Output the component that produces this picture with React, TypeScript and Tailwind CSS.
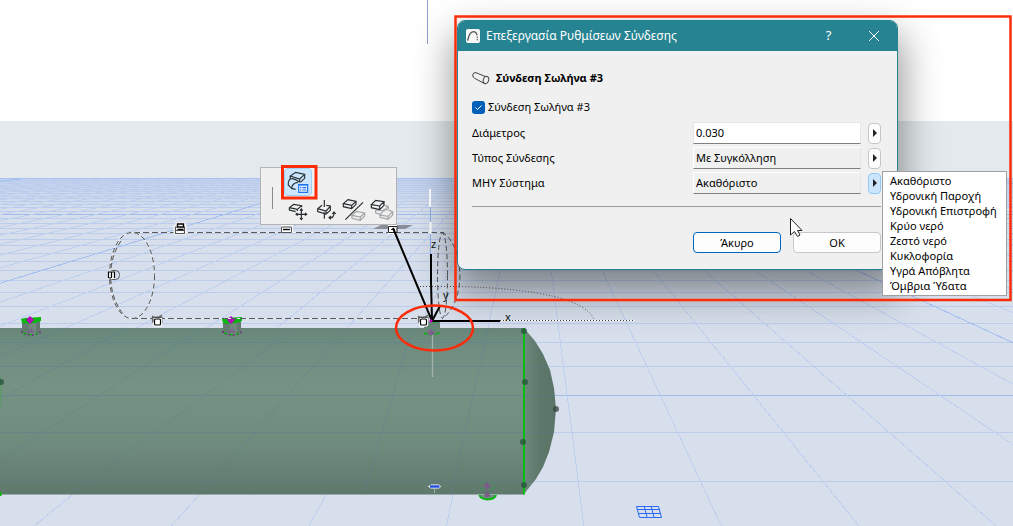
import React, { useState } from "react";

const VANISH_X = 532;
const HORIZON = 120;
const GRID_TOP = 178;

const rows = Array.from({ length: 36 }, (_, i) => i - 1);
const rays = Array.from({ length: 61 }, (_, i) => i - 30);

function Grid() {
  return (
    <g fill="none" shapeRendering="crispEdges">
      {rows.map((k) => {
        const y = HORIZON + 2317 / (6.41 + k);
        if (y < GRID_TOP) return null;
        const major = (k + 14) % 16 === 0;
        return <path key={k} d={`M0 ${y}H1013`} stroke={major ? "#a3bbea" : "#bccdec"} />;
      })}
      {rays.map((n) => {
        const slope = 0.1278 + 0.3386 * n;
        const major = (n + 10) % 16 === 0;
        return (
          <path
            key={n}
            d={`M${VANISH_X + slope * (GRID_TOP - HORIZON)} ${GRID_TOP}L${VANISH_X + slope * 420} 540`}
            stroke={major ? "#a3bff0" : "#bfcfef"}
          />
        );
      })}
    </g>
  );
}

function Nozzle({ x }: { x: number }) {
  return (
    <g transform={`translate(${x} 0)`}>
      <path d="M-9 320V333Q0 337 9 332V319Z" fill="#64796f" />
      <path d="M-2 320V335H5V320Z" fill="#7e978a" opacity=".5" />
      <path d="M-10 319L-6 318L10 317L10 321Q0 325 -9 323Z" fill="#08b80f" />
      <path d="M-1 316L3 320L-1 324L-5 320Z" fill="#b800bd" />
      <path d="M0 328L4 333H-4Z" fill="#7d5f8c" opacity=".8" />
      <path d="M-9 331V333Q0 337 9 333V330" fill="none" stroke="#7b1b86" strokeWidth="1.3" strokeDasharray="2 2" />
      <path d="M-8 333Q0 336 8 333" fill="none" stroke="#08b80f" strokeWidth="1.4" strokeDasharray="3 3" />
    </g>
  );
}

function Grip({ x, y }: { x: number; y: number }) {
  return (
    <g transform={`translate(${x} ${y})`} fill="none">
      <path d="M-3 -5H4V-2H5V4H-5V-2H-3Z" fill="#f5f6f8" stroke="#fff" strokeWidth="3" />
      <path d="M-3 -2H-4.500V4.500H4.500V-2H4M-4 1.500H4" stroke="#555" strokeWidth="1.2" />
      <path d="M-2.500 -5H3.500V-2H-2.500ZM-2.500 0.500H3.500" stroke="#000" strokeWidth="1.4" />
    </g>
  );
}

function CornerGrip({ x, y }: { x: number; y: number }) {
  return (
    <g transform={`translate(${x} ${y})`} fill="none">
      <path d="M-4.500 2V-4H5V2M-5 -5L-2 -3M5 -6L2 -4" stroke="#666" strokeWidth="1.2" />
      <rect x="-2.500" y="-2" width="6" height="6" rx="1" fill="#fff" stroke="#fff" strokeWidth="3.5" />
      <rect x="-2.500" y="-2" width="6" height="6" rx="1" fill="#fff" stroke="#000" strokeWidth="1.2" />
      <path d="M-4 1V-3.500H4.500" stroke="#555" />
    </g>
  );
}

function Scene() {
  return (
    <svg
      className="absolute inset-0 h-full w-full"
      viewBox="0 0 1013 526"
      preserveAspectRatio="xMinYMin slice"
      aria-hidden="true"
    >
      <defs>
        <linearGradient id="shell" x1="0" y1="0" x2="0" y2="1">
          <stop offset="0" stopColor="#68867a" />
          <stop offset=".12" stopColor="#6f8d80" />
          <stop offset=".35" stopColor="#759284" />
          <stop offset=".7" stopColor="#6f8b7e" />
          <stop offset="1" stopColor="#5f786c" />
        </linearGradient>
        <linearGradient id="cap" x1="0" y1="0" x2="1" y2="0">
          <stop offset="0" stopColor="#6d897b" />
          <stop offset=".5" stopColor="#5d776b" />
          <stop offset="1" stopColor="#5b7468" />
        </linearGradient>
        <linearGradient id="haze" x1="0" y1="0" x2="0" y2="1">
          <stop offset="0" stopColor="#b3c9f0" stopOpacity=".6" />
          <stop offset="1" stopColor="#b3c9f0" stopOpacity="0" />
        </linearGradient>
      </defs>
      <path d="M0 0H1013V121H0Z" fill="#fff" />
      <path d="M0 121H1013V178H0Z" fill="#e3e9ec" />
      <path d="M0 178H1013V526H0Z" fill="#d6dfeb" />
      <path d="M0 178H1013V210H0Z" fill="url(#haze)" />
      <Grid />
      <path d="M0 178.500H1013" stroke="#a9c1f2" />
      <path d="M427.500 0V44" stroke="#8e9fd0" />

      <path d="M0 328H524V494.500H0Z" fill="url(#shell)" />
      <path d="M524 328L535 341L543 354L550 370L554 388L556 409L554 432L549 452L543 467L536 479L524 494Z" fill="url(#cap)" />
      <g stroke="#55799f" fill="none">
        <path d="M0 342.500H535M0 366.500H548M0 395.500H555M0 432.500H553M0 481.500H534" strokeOpacity=".35" />
        <path d="M0 357L64 328M0 399L127 328M0 460L203 328M71 494.500L295 328M200 494.500L347 328M364 494.500L412 328M451 494.500L488 328" strokeOpacity=".3" />
      </g>
      <path d="M0 372Q3 390 0 411Z" fill="#5a9b68" />
      <path d="M0 492V496" stroke="#08b80f" strokeWidth="3" />
      <path d="M524 328V494.500" stroke="#08be12" strokeWidth="2" />
      <g fill="#24513a" fillOpacity=".75">
        <circle cx="1" cy="382" r="3" />
        <circle cx="524" cy="331" r="3" />
        <circle cx="525" cy="382" r="3" />
        <circle cx="523" cy="442" r="3" />
        <circle cx="524" cy="485" r="3" />
        <circle cx="556" cy="409" r="3" fill="#34453f" />
      </g>
      <path d="M479.500 495Q480 499 487.500 499.500Q495 499 496 495" fill="#6f8b7e" stroke="#08b80f" strokeWidth="2" />
      <path d="M487 482L490.500 486L487 489.500L483.500 486ZM487 491L490 495L487 498L484 495Z" fill="#7a5c88" />
      <path d="M481 484L484 481M492 482L495 485M480 488L484 490M491 490L495 487" stroke="#2a9a4a" strokeDasharray="2 1" />

      <Nozzle x={31} />
      <Nozzle x={232} />

      <g fill="none" shapeRendering="crispEdges">
        <path d="M134 232.500H444M132 318.500H428" stroke="#e9edf3" />
        <path d="M134 232.500H444M132 318.500H428" stroke="#5b5b5b" strokeDasharray="6 3" />
      </g>
      <g fill="none">
        <ellipse cx="132" cy="275.500" rx="22.500" ry="43" stroke="#f2f4f8" />
        <ellipse cx="132" cy="275.500" rx="22.500" ry="43" stroke="#505050" strokeDasharray="5 3" />
        <path d="M121 241Q109 258 111 283Q113 302 124 315" stroke="#505050" strokeDasharray="5 3" />
        <ellipse cx="442.500" cy="275.500" rx="5" ry="42.500" stroke="#555" strokeDasharray="5 3" />
        <path d="M442 232Q459 243 460 276Q459 306 442 319" stroke="#555" strokeDasharray="5 3" />
        <path d="M420 286.500H460Q580 290 594 319" stroke="#555" strokeDasharray="1 2" />
        <path d="M500 320.500H635" stroke="#fff" />
        <path d="M500 320.500H635" stroke="#444" strokeDasharray="1 2" />
      </g>
      <path d="M373 229L381 225H413L405 229Z" fill="#898e96" />
      <Grip x={180} y={229} />
      <path d="M282 225H292V232H282Z" fill="#eef1f5" stroke="#fff" strokeWidth="2" />
      <path d="M281.500 227H291.500V232.500H281.500Z" fill="none" stroke="#555" />
      <path d="M283 229.500H290" stroke="#000" strokeWidth="1.3" />
      <g fill="none">
        <rect x="109" y="270.500" width="10.500" height="9" rx="4" stroke="#555" />
        <rect x="109" y="272" width="5" height="6" rx="1" fill="#f5f6f8" stroke="#fff" strokeWidth="2" />
        <path d="M108.500 278V272H114.500V278M111.500 272V278M109 278H111" stroke="#000" strokeWidth="1.2" />
      </g>
      <CornerGrip x={157} y={321} />

      <path d="M424 322V332Q433 337 440 332V322Z" fill="#678776" />
      <path d="M424 333Q432 337 441 332M425 322H438" fill="none" stroke="#08b80f" strokeWidth="1.500" strokeDasharray="4 2" />
      <path d="M431 329L435 333L431 336L427 333Z" fill="#7d5f8c" />
      <path d="M432.500 335V377" stroke="#a3b4ae" strokeWidth="1.300" />
      <path d="M430.500 207V282" stroke="#8eaeea" />
      <path d="M430 189V207M430.500 222V234" stroke="#fff" strokeWidth="2" />
      <path d="M431 254V282L432 320" fill="none" stroke="#000" strokeWidth="2" />
      <path d="M388 225H397V234H388Z" fill="#fff" />
      <path d="M388.500 226.500H397V232.500H388.500ZM391 229.500H395" fill="none" stroke="#222" />
      <path d="M393 228L432 321H500M432 321L440 306" fill="none" stroke="#000" strokeWidth="2" />
      <path d="M430 320L432 322" stroke="#c400bd" strokeWidth="3" />
      <CornerGrip x={423} y={321} />
      <g className="font-['Noto_Sans',sans-serif] text-[11px]" fill="#111">
        <text x="431" y="248">z</text>
        <text x="443" y="299">y</text>
        <text x="505" y="321">x</text>
      </g>
      <path d="M428 486.500L431 484.500H439L441 486.500L439 488.500H431Z" fill="#fff" />
      <path d="M430 486.500H439.500" stroke="#244fe0" strokeWidth="2.500" />
      <path d="M434.500 489V493" stroke="#a3b4ae" />
      <g fill="none" stroke="#286af5">
        <path d="M636.500 506.500H658.500L661.500 517.500H639.500ZM637 509.500H660M638 513.500H661M644 506L647 517M651 506L654 517" />
      </g>
    </svg>
  );
}

type Tool = { name: string; box: string; art: React.ReactNode };

const slab = "M0 13L14 1L38 6L25 18ZM0 13V22L25 28L38 15V6M25 18V28";

const tools: Tool[] = [
  {
    name: "Μετακίνηση",
    box: "102 123 84 84",
    art: (
      <g>
        <path d="M137 170L118 165V158L131 148L155 152V157M118 158L142 163L155 152M142 163V168" />
        <path d="M154 163V193M139 178H169M150 167L154 162L158 167M150 189L154 194L158 189M143 174L138 178L143 182M165 174L170 178L165 182" />
      </g>
    ),
  },
  {
    name: "Περιστροφή",
    box: "186 123 84 84",
    art: (
      <g>
        <path d="M223 135V156M223 172V191M216 151L203 161V170L228 177L241 166V153L229 151M203 161L228 168L241 154M228 168V177" />
        <path d="M239 188Q252 190 252 173M247 177L252 171L257 177M243 183L237 188L243 193" />
      </g>
    ),
  },
  {
    name: "Καθρέφτισμα",
    box: "270 123 84 84",
    art: (
      <g>
        <path d="M339 142L286 194" />
        <path transform="translate(280 133)" d={slab} />
        <path transform="translate(306 168)" d={slab} stroke="#a2a5a7" />
      </g>
    ),
  },
  {
    name: "Πολλαπλασιασμός",
    box: "354 123 84 84",
    art: (
      <g>
        <path d="M377 165V174L392 178M405 152L415 154V162M390 180V187L414 193L428 180V170L414 165L402 163L390 180L414 184L428 170M414 184V193M377 165L402 168L415 154" stroke="#a2a5a7" />
        <path d="M364 149L377 136L402 140L389 153ZM364 149V158L389 164L402 151V140M389 153V164" />
      </g>
    ),
  },
];

function Palette() {
  return (
    <div
      role="toolbar"
      aria-label="Επεξεργασία"
      className="absolute left-[260px] top-[167px] flex items-center border border-[#b3b3b3] bg-[#f0f0f0]"
    >
      <span className="mx-[11px] mt-1 h-[22px] w-px bg-[#8a8a8a]" />
      <div>
        <button aria-label="Ρυθμίσεις σύνδεσης" className="block size-7 rounded border border-[#9fd0f8] bg-[#cce6fd]">
          <svg viewBox="105 42 78 78" className="size-full" fill="none" stroke="#2d363b" strokeWidth="3.5">
            <path d="M121 63L137 52L164 58L149 72ZM121 63V71M164 58V70L151 82M149 72V82M121 71Q114 78 115 90L125 100Q126 84 144 82M121 71Q136 70 149 82M125 100L137 103" />
            <path d="M146 89H173V112H146Z" fill="#eaf4ff" stroke="#1a73f0" />
            <path d="M150 98H154M157 98H169M150 105H154M157 105H169M146 90H173" stroke="#1a73f0" />
          </svg>
        </button>
        <div className="flex">
          {tools.map((t) => (
            <button key={t.name} aria-label={t.name} className="size-7">
              <svg viewBox={t.box} className="size-full" fill="none" stroke="#262c2f" strokeWidth="3.5">
                {t.art}
              </svg>
            </button>
          ))}
        </div>
      </div>
    </div>
  );
}

function Field({ id, label, value, editable, open, onToggle }: {
  id: string;
  label: string;
  value: string;
  editable?: boolean;
  open?: boolean;
  onToggle?: () => void;
}) {
  return (
    <div className="flex items-center">
      <label htmlFor={id} className="flex-1">{label}</label>
      <input
        id={id}
        key={value}
        defaultValue={value}
        readOnly={!editable}
        className={`h-[22px] w-[168px] border border-[#e6e6e6] border-b-[#808080] px-[2px] pb-[2px] outline-none ${editable ? "bg-white" : "bg-[#f0f0f0] border-t-white border-l-white"}`}
      />
      <button
        type="button"
        onClick={onToggle}
        aria-label={`Επιλογές: ${label}`}
        className={`ml-[7px] flex h-[21px] w-[13px] items-center justify-center rounded border ${open ? "border-[#90c8f6] bg-[#cce6fd]" : "border-[#c6c6c6] bg-[#fdfdfd]"}`}
      >
        <svg viewBox="0 0 4 8" className="h-2 w-1" aria-hidden="true">
          <path d="M0 0L4 4L0 8Z" fill="#222" />
        </svg>
      </button>
    </div>
  );
}

const systems = [
  "Ακαθόριστο",
  "Υδρονική Παροχή",
  "Υδρονική Επιστροφή",
  "Κρύο νερό",
  "Ζεστό νερό",
  "Κυκλοφορία",
  "Υγρά Απόβλητα",
  "Όμβρια Ύδατα",
];

function SettingsDialog({ system, open, onToggle }: { system: string; open: boolean; onToggle: () => void }) {
  return (
    <section
      role="dialog"
      aria-labelledby="dialog-title"
      className="absolute left-[457px] top-[20px] w-[441px] overflow-hidden rounded-lg border border-[#268391] bg-[#f0f0f0] shadow-[0_18px_38px_4px_rgba(0,0,0,0.42)]"
    >
      <header className="flex h-[30px] items-center bg-[#268391] pl-2 text-[12px] text-white">
        <svg viewBox="0 0 42 42" className="size-[14px]" aria-hidden="true">
          <rect width="42" height="42" rx="6" fill="#f7f7f8" />
          <path d="M5 35Q10 9 22 8Q31 8 33 19" fill="none" stroke="#555a60" strokeWidth="4" />
          <path d="M34 23V26M34 31V34" stroke="#333" strokeWidth="4" />
        </svg>
        <h1 id="dialog-title" className="ml-[6px] flex-1 whitespace-nowrap">Επεξεργασία Ρυθμίσεων Σύνδεσης</h1>
        <button aria-label="Βοήθεια" className="h-full w-[45px] text-[13px]">?</button>
        <button aria-label="Κλείσιμο" className="flex h-full w-[46px] items-center justify-center">
          <svg viewBox="0 0 10 10" className="size-[10px]" stroke="#fff" aria-hidden="true">
            <path d="M0 0L10 10M10 0L0 10" />
          </svg>
        </button>
      </header>
      <form className="px-[14px] pb-[16px] pr-4 pt-[17px] text-[11px] leading-[16px]" onSubmit={(e) => e.preventDefault()}>
        <h2 className="flex h-5 items-center gap-[6px] font-bold">
          <svg viewBox="68 186 54 40" className="h-[14px] w-[18px]" fill="none" stroke="#444" strokeWidth="3" aria-hidden="true">
            <path d="M109 202L80 190Q72 188 70 197Q70 204 76 207L106 223" />
            <ellipse cx="110" cy="212" rx="8" ry="11" transform="rotate(18 110 212)" />
          </svg>
          Σύνδεση Σωλήνα #3
        </h2>
        <label className="mt-[11px] flex h-4 items-center gap-[3px]">
          <input type="checkbox" defaultChecked className="peer sr-only" />
          <svg viewBox="0 0 13 13" className="size-[13px] rounded-[3px] bg-[#005fb8]" fill="none" stroke="#fff" aria-hidden="true">
            <path d="M3.500 6.500L5.500 8.500L9.500 4.500" />
          </svg>
          Σύνδεση Σωλήνα #3
        </label>
        <div className="mt-[7px] flex flex-col gap-[3px]">
          <Field id="diameter" label="Διάμετρος" value="0.030" editable />
          <Field id="joint" label="Τύπος Σύνδεσης" value="Με Συγκόλληση" />
          <Field id="system" label="ΜΗΥ Σύστημα" value={system} open={open} onToggle={onToggle} />
        </div>
        <hr className="mt-3 border-[#9a9a9a]" />
        <div className="mt-[25px] flex justify-end gap-3">
          <button type="button" className="h-[21px] w-[88px] rounded border border-[#0067c0] bg-[#fdfdfd]">Άκυρο</button>
          <button type="submit" className="h-[21px] w-[88px] rounded border border-[#c8c8c8] bg-[#fdfdfd]">OK</button>
        </div>
      </form>
    </section>
  );
}

export default function App() {
  const [system, setSystem] = useState(systems[0]);
  const [open, setOpen] = useState(true);
  return (
    <main className="relative min-h-screen overflow-hidden bg-white font-['Noto_Sans',sans-serif] text-black">
      <Scene />
      <Palette />
      <SettingsDialog system={system} open={open} onToggle={() => setOpen(!open)} />
      {open && (
        <ul role="menu" className="absolute left-[882px] top-[171px] w-[125px] border border-[#a0a0a0] bg-white pb-[2px] pl-[7px] pt-px text-[11px] leading-[15px]">
          {systems.map((s) => (
            <li key={s} role="none">
              <button role="menuitem" className="block w-full whitespace-nowrap text-left" onClick={() => { setSystem(s); setOpen(false); }}>
                {s}
              </button>
            </li>
          ))}
        </ul>
      )}
      <svg className="pointer-events-none absolute left-0 top-0 h-[526px] w-[1013px]" fill="none" stroke="#fb2c0a" strokeWidth="2.500" aria-hidden="true">
        <path d="M455.500 16.500H1010.500V300H455.500Z" />
        <path d="M282.500 166.500H316V198H282.500Z" strokeWidth="3" />
        <ellipse cx="434.500" cy="328" rx="38.500" ry="22.500" />
        <path d="M790.500 218.500V235L794.500 231.500L797.500 236.500L800 235L797.500 230.500H802Z" fill="#fff" stroke="#222" strokeWidth="1" />
      </svg>
    </main>
  );
}
